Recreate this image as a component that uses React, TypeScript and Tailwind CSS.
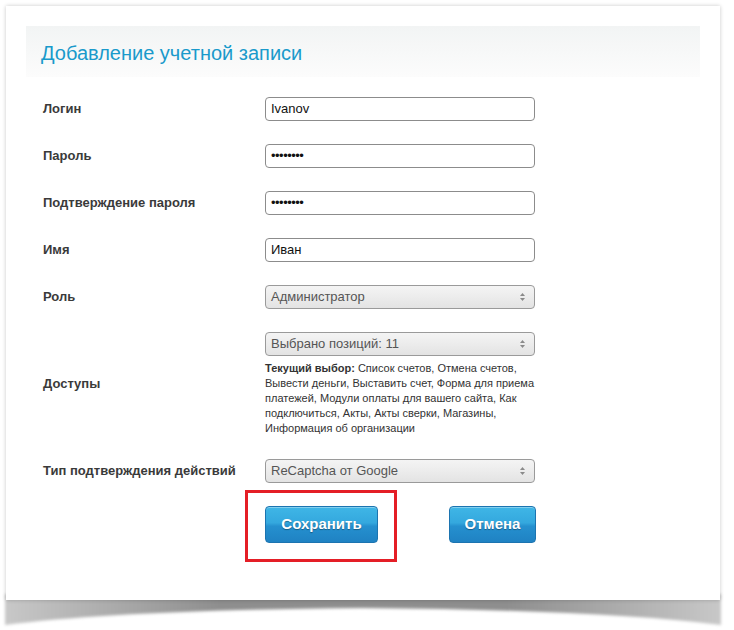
import React from "react";

const font = { fontFamily: '"Liberation Sans", Arial, sans-serif' };

function Arrows() {
  return (
    <svg width="7" height="10" viewBox="0 0 7 10" className="shrink-0">
      <path d="M3.5 1 L6 4 L1 4 Z" fill="#8a8a8a" />
      <path d="M3.5 9 L6 6 L1 6 Z" fill="#8a8a8a" />
    </svg>
  );
}

function TextInput({ value, dots }: { value: string; dots?: boolean }) {
  return (
    <div className="h-[24px] w-[270px] rounded-[4px] border border-[#8c8c8c] bg-white flex items-center px-[5px]">
      <span className={dots ? "text-[13px] text-[#111] tracking-[-0.5px]" : "text-[13px] text-[#111]"}>{value}</span>
    </div>
  );
}

function Select({ value }: { value: string }) {
  return (
    <div className="h-[24px] w-[270px] rounded-[4px] border border-[#9a9a9a] bg-[linear-gradient(180deg,#f4f4f4_0%,#ececec_50%,#e3e3e3_100%)] flex items-center justify-between pl-[5px] pr-[8px]">
      <span className="text-[13px] text-[#555]">{value}</span>
      <Arrows />
    </div>
  );
}

function Label({ children }: { children: React.ReactNode }) {
  return <div className="w-[222px] shrink-0 text-[13px] font-bold text-[#3a3a3a]">{children}</div>;
}

function Button({ children, w }: { children: React.ReactNode; w: string }) {
  return (
    <button
      className={`${w} h-[37px] rounded-[4px] border border-[#1c74b0] bg-[linear-gradient(180deg,#3fb6e6_0%,#34a8de_45%,#2590cf_55%,#1f82c3_100%)] shadow-[inset_0_1px_0_rgba(255,255,255,0.35)] text-white text-[15px] font-bold [text-shadow:0_1px_1px_rgba(0,0,0,0.35)] flex items-center justify-center`}
      style={font}
    >
      {children}
    </button>
  );
}

export default function App() {
  return (
    <div className="w-[734px] h-[630px] bg-white pt-[6px] pl-[6px] relative" style={font}>
      <div className="relative w-[714px]">
        {/* curled bottom shadow */}
        <svg
          className="absolute left-[-3px] top-[588px] blur-[1.5px]"
          width="720"
          height="36"
          viewBox="0 0 720 36"
        >
          <defs>
            <linearGradient id="sh" x1="0" x2="1" y1="0" y2="0">
              <stop offset="0" stopColor="#c8c8c8" />
              <stop offset="0.3" stopColor="#8e8e8e" />
              <stop offset="0.7" stopColor="#8e8e8e" />
              <stop offset="1" stopColor="#c8c8c8" />
            </linearGradient>
          </defs>
          <path d="M2 0 H718 V31 Q600 16 360 14 Q120 16 2 31 Z" fill="url(#sh)" />
        </svg>
        <div className="relative w-[714px] h-[594px] bg-white shadow-[0_0_4px_rgba(0,0,0,0.22)] p-[20px]">
          <div className="h-[51px] flex items-center pl-[15px] pt-[2px] bg-[linear-gradient(180deg,#f2f4f4_0%,#fcfcfc_100%)]">
            <h1 className="text-[20px] text-[#1a9acb] font-normal">Добавление учетной записи</h1>
          </div>

          <div className="mt-[20px] pl-[17px] flex flex-col gap-[23px]">
            <div className="flex items-center">
              <Label>Логин</Label>
              <TextInput value="Ivanov" />
            </div>
            <div className="flex items-center">
              <Label>Пароль</Label>
              <TextInput value="••••••••" dots />
            </div>
            <div className="flex items-center">
              <Label>Подтверждение пароля</Label>
              <TextInput value="••••••••" dots />
            </div>
            <div className="flex items-center">
              <Label>Имя</Label>
              <TextInput value="Иван" />
            </div>
            <div className="flex items-center">
              <Label>Роль</Label>
              <Select value="Администратор" />
            </div>
            <div className="flex items-center">
              <Label>Доступы</Label>
              <div className="w-[270px]">
                <Select value="Выбрано позиций: 11" />
                <p className="mt-[5px] text-[11px] leading-[15px] text-[#333]">
                  <b>Текущий выбор:</b> Список счетов, Отмена счетов, Вывести деньги, Выставить счет, Форма для приема
                  платежей, Модули оплаты для вашего сайта, Как подключиться, Акты, Акты сверки, Магазины, Информация
                  об организации
                </p>
              </div>
            </div>
            <div className="flex items-center">
              <Label>Тип подтверждения действий</Label>
              <Select value="ReCaptcha от Google" />
            </div>
            <div className="flex">
              <div className="w-[222px] shrink-0" />
              <div className="w-[271px] flex justify-between">
                <div className="relative">
                  <Button w="w-[113px]">Сохранить</Button>
                  <div className="absolute left-[-20px] top-[-16px] right-[-19px] bottom-[-19px] border-[3px] border-[#e41e26] pointer-events-none" />
                </div>
                <Button w="w-[87px]">Отмена</Button>
              </div>
            </div>
          </div>
        </div>
      </div>
    </div>
  );
}
